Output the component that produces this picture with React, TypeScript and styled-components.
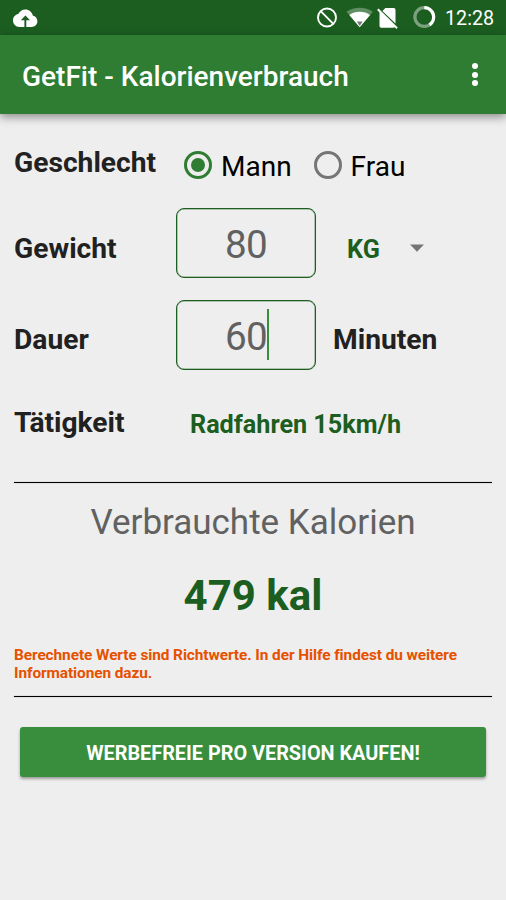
import React from 'react';
import styled, { createGlobalStyle } from 'styled-components';

const GlobalStyle = createGlobalStyle`
  * { box-sizing: border-box; }
  body { margin: 0; background: #eeeeee; font-family: Roboto, "Liberation Sans", sans-serif; }
`;

const Screen = styled.div`
  width: 506px;
  height: 900px;
  display: flex;
  flex-direction: column;
  overflow: hidden;
  background: #eeeeee;
`;

const StatusBar = styled.header`
  height: 35px;
  flex: none;
  display: flex;
  justify-content: space-between;
  padding-left: 12px;
  background: #1b5e20;
  svg { display: block; }
`;

const StatusIcons = styled.div`
  display: flex;
  width: 194px;
`;

const Clock = styled.time`
  margin-left: 7px;
  line-height: 38px;
  font-size: 19.7px;
  color: #fff;
`;

const Toolbar = styled.div`
  height: 79px;
  flex: none;
  display: flex;
  align-items: center;
  justify-content: space-between;
  padding: 0 28px 0 22px;
  background: #2e7d32;
  box-shadow: 0 3px 9px rgba(0, 0, 0, 0.42);
`;

const Title = styled.h1`
  margin: 4px 0 0;
  font-size: 28px;
  font-weight: 500;
  line-height: 34px;
  color: #fff;
`;

const Overflow = styled.button`
  display: flex;
  flex-direction: column;
  gap: 2.4px;
  padding: 0;
  margin-top: 0;
  border: 0;
  background: none;
`;

const Dot = styled.span`
  width: 6px;
  height: 6px;
  border-radius: 50%;
  background: #fff;
`;

const Content = styled.main`
  display: flex;
  flex-direction: column;
  padding: 0 14px;
`;

const Row = styled.div<{ $height: number; $top?: number }>`
  display: grid;
  grid-template-columns: 162px 1fr;
  align-items: center;
  height: ${p => p.$height}px;
  margin-top: ${p => p.$top ?? 0}px;
`;

const Controls = styled.div`
  display: flex;
  align-items: center;
`;

const Label = styled.span<{ $drop?: number; $left?: number }>`
  font-size: 28.2px;
  font-weight: 700;
  line-height: 34px;
  color: #212121;
  margin-top: ${p => p.$drop ?? 0}px;
  margin-left: ${p => p.$left ?? 0}px;
`;

const Option = styled.label<{ $left: number }>`
  display: flex;
  align-items: center;
  margin-left: ${p => p.$left}px;
  font-size: 28px;
  line-height: 34px;
  color: #000;
`;

const OptionText = styled.span`
  margin: 3px 0 0 9px;
`;

const Radio = styled.span<{ $on?: boolean }>`
  display: grid;
  place-items: center;
  width: 28px;
  height: 28px;
  border: 3px solid ${p => (p.$on ? '#2e7d32' : '#757575')};
  border-radius: 50%;
  &::after {
    content: '';
    width: 14px;
    height: 14px;
    border-radius: 50%;
    background: ${p => (p.$on ? '#2e7d32' : 'transparent')};
  }
`;

const Field = styled.div`
  display: flex;
  align-items: center;
  justify-content: center;
  width: 140px;
  height: 70px;
  border: 1px solid #1b5e20;
  box-shadow: inset 0 0 0 0.5px rgba(27, 94, 32, 0.6);
  border-radius: 8px;
  font-size: 38.6px;
  letter-spacing: -0.6px;
  line-height: 46px;
  color: #616161;
  padding-top: 3px;
`;

const Caret = styled.span`
  width: 2px;
  height: 51px;
  margin: -4px -2px 0 0;
  background: #388e3c;
`;

const Choice = styled.span<{ $left: number; $drop?: number }>`
  margin: ${p => p.$drop ?? 4}px 0 0 ${p => p.$left}px;
  font-size: 25.2px;
  font-weight: 700;
  line-height: 30px;
  color: #1b5e20;
`;

const Arrow = styled.svg`
  margin: 9px 0 0 30.5px;
`;

const Divider = styled.hr<{ $top: number }>`
  width: 100%;
  height: 1px;
  margin: ${p => p.$top}px 0 0;
  border: 0;
  background: #000;
  box-shadow: 0 0 1px rgba(0, 0, 0, 0.6);
`;

const ResultTitle = styled.h2`
  margin: 18px 0 0;
  text-align: center;
  font-size: 35px;
  font-weight: 400;
  line-height: 44px;
  color: #616161;
`;

const Result = styled.strong`
  margin-top: 26px;
  text-align: center;
  font-size: 42px;
  line-height: 50px;
  color: #1b5e20;
`;

const Note = styled.p`
  margin: 25px 0 0;
  font-size: 15.4px;
  letter-spacing: -0.08px;
  font-weight: 700;
  line-height: 18px;
  color: #e65100;
`;

const BuyButton = styled.button`
  height: 50px;
  margin: 30px 6px 0;
  padding: 3px 0 0;
  border: 0;
  border-radius: 3px;
  background: #388e3c;
  box-shadow: 0 2px 3px rgba(0, 0, 0, 0.35);
  font: 700 19.85px Roboto, sans-serif;
  color: #fff;
`;

export default function App() {
  return (
    <Screen>
      <GlobalStyle />
      <StatusBar>
        <svg width="27" height="35" viewBox="0 0 27 35">
          <path fill="#fff" d="M21 15.8C20.1 12 17 9.5 13.4 9.5c-3.2 0-5.8 1.8-7.1 4.6C3.2 14.6 1 17.3 1 20.5 1 24 3.7 27 7.3 27h12.2c3.3 0 5.9-2.6 5.9-5.7 0-3-2-5.2-4.4-5.5z" />
          <path fill="#1b5e20" d="M13.4 15.6l4.6 4.6h-3.7V27h-1.9v-6.8H8.8z" />
        </svg>
        <StatusIcons>
          <svg width="126" height="35" viewBox="0 0 126 35">
            <g fill="none" stroke="#fff" strokeWidth="1.9">
              <circle cx="15" cy="17.5" r="9" />
              <path d="M8.7 11.2l12.6 12.6" />
            </g>
            <path fill="#fff" fillOpacity=".3" d="M34.5 11.8c7.5-5.4 18.9-5.4 26.4 0L47.7 27.3z" />
            <path fill="#fff" d="M37.3 15c6-4.2 14.8-4.2 20.8 0L47.7 27.3z" />
            <path fill="#757575" d="M44.9 21.5h5.7l-2.9 4.6z" />
            <path fill="#fff" d="M73.4 8h8.3q1.8 0 1.8 1.8v13.7L70.4 11zM67.5 11L83 26.2q-.2 1.5-2 1.5H69.3q-1.8 0-1.8-1.8z" />
            <path stroke="#fff" strokeWidth="1.9" d="M65.8 9.3l19.3 19" />
            <circle cx="112.3" cy="17" r="9.4" fill="none" stroke="#7ca17e" strokeWidth="3.2" />
            <path d="M112.3 7.6A9.4 9.4 0 0 1 117.5 24.8" fill="none" stroke="#fff" strokeWidth="3.2" />
          </svg>
          <Clock>12:28</Clock>
        </StatusIcons>
      </StatusBar>
      <Toolbar>
        <Title>GetFit - Kalorienverbrauch</Title>
        <Overflow aria-label="Menü">
          <Dot /><Dot /><Dot />
        </Overflow>
      </Toolbar>
      <Content>
        <Row $height={40} $top={31}>
          <Label $drop={-4}>Geschlecht</Label>
          <Controls>
            <Option $left={8}><Radio $on /><OptionText>Mann</OptionText></Option>
            <Option $left={22}><Radio /><OptionText>Frau</OptionText></Option>
          </Controls>
        </Row>
        <Row $height={70} $top={23}>
          <Label $drop={11}>Gewicht</Label>
          <Controls>
            <Field>80</Field>
            <Choice $left={31} $drop={13}>KG</Choice>
            <Arrow width="14" height="8" viewBox="0 0 14 8">
              <path d="M0 .5h14L7 7.7z" fill="#757575" />
            </Arrow>
          </Controls>
        </Row>
        <Row $height={70} $top={22}>
          <Label $drop={10}>Dauer</Label>
          <Controls>
            <Field>60<Caret /></Field>
            <Label $drop={10} $left={17}>Minuten</Label>
          </Controls>
        </Row>
        <Row $height={40} $top={33}>
          <Label>Tätigkeit</Label>
          <Controls><Choice $left={14}>Radfahren 15km/h</Choice></Controls>
        </Row>
        <Divider $top={39} />
        <ResultTitle>Verbrauchte Kalorien</ResultTitle>
        <Result>479 kal</Result>
        <Note>Berechnete Werte sind Richtwerte. In der Hilfe findest du weitere Informationen dazu.</Note>
        <Divider $top={14} />
        <BuyButton>WERBEFREIE PRO VERSION KAUFEN!</BuyButton>
      </Content>
    </Screen>
  );
}
